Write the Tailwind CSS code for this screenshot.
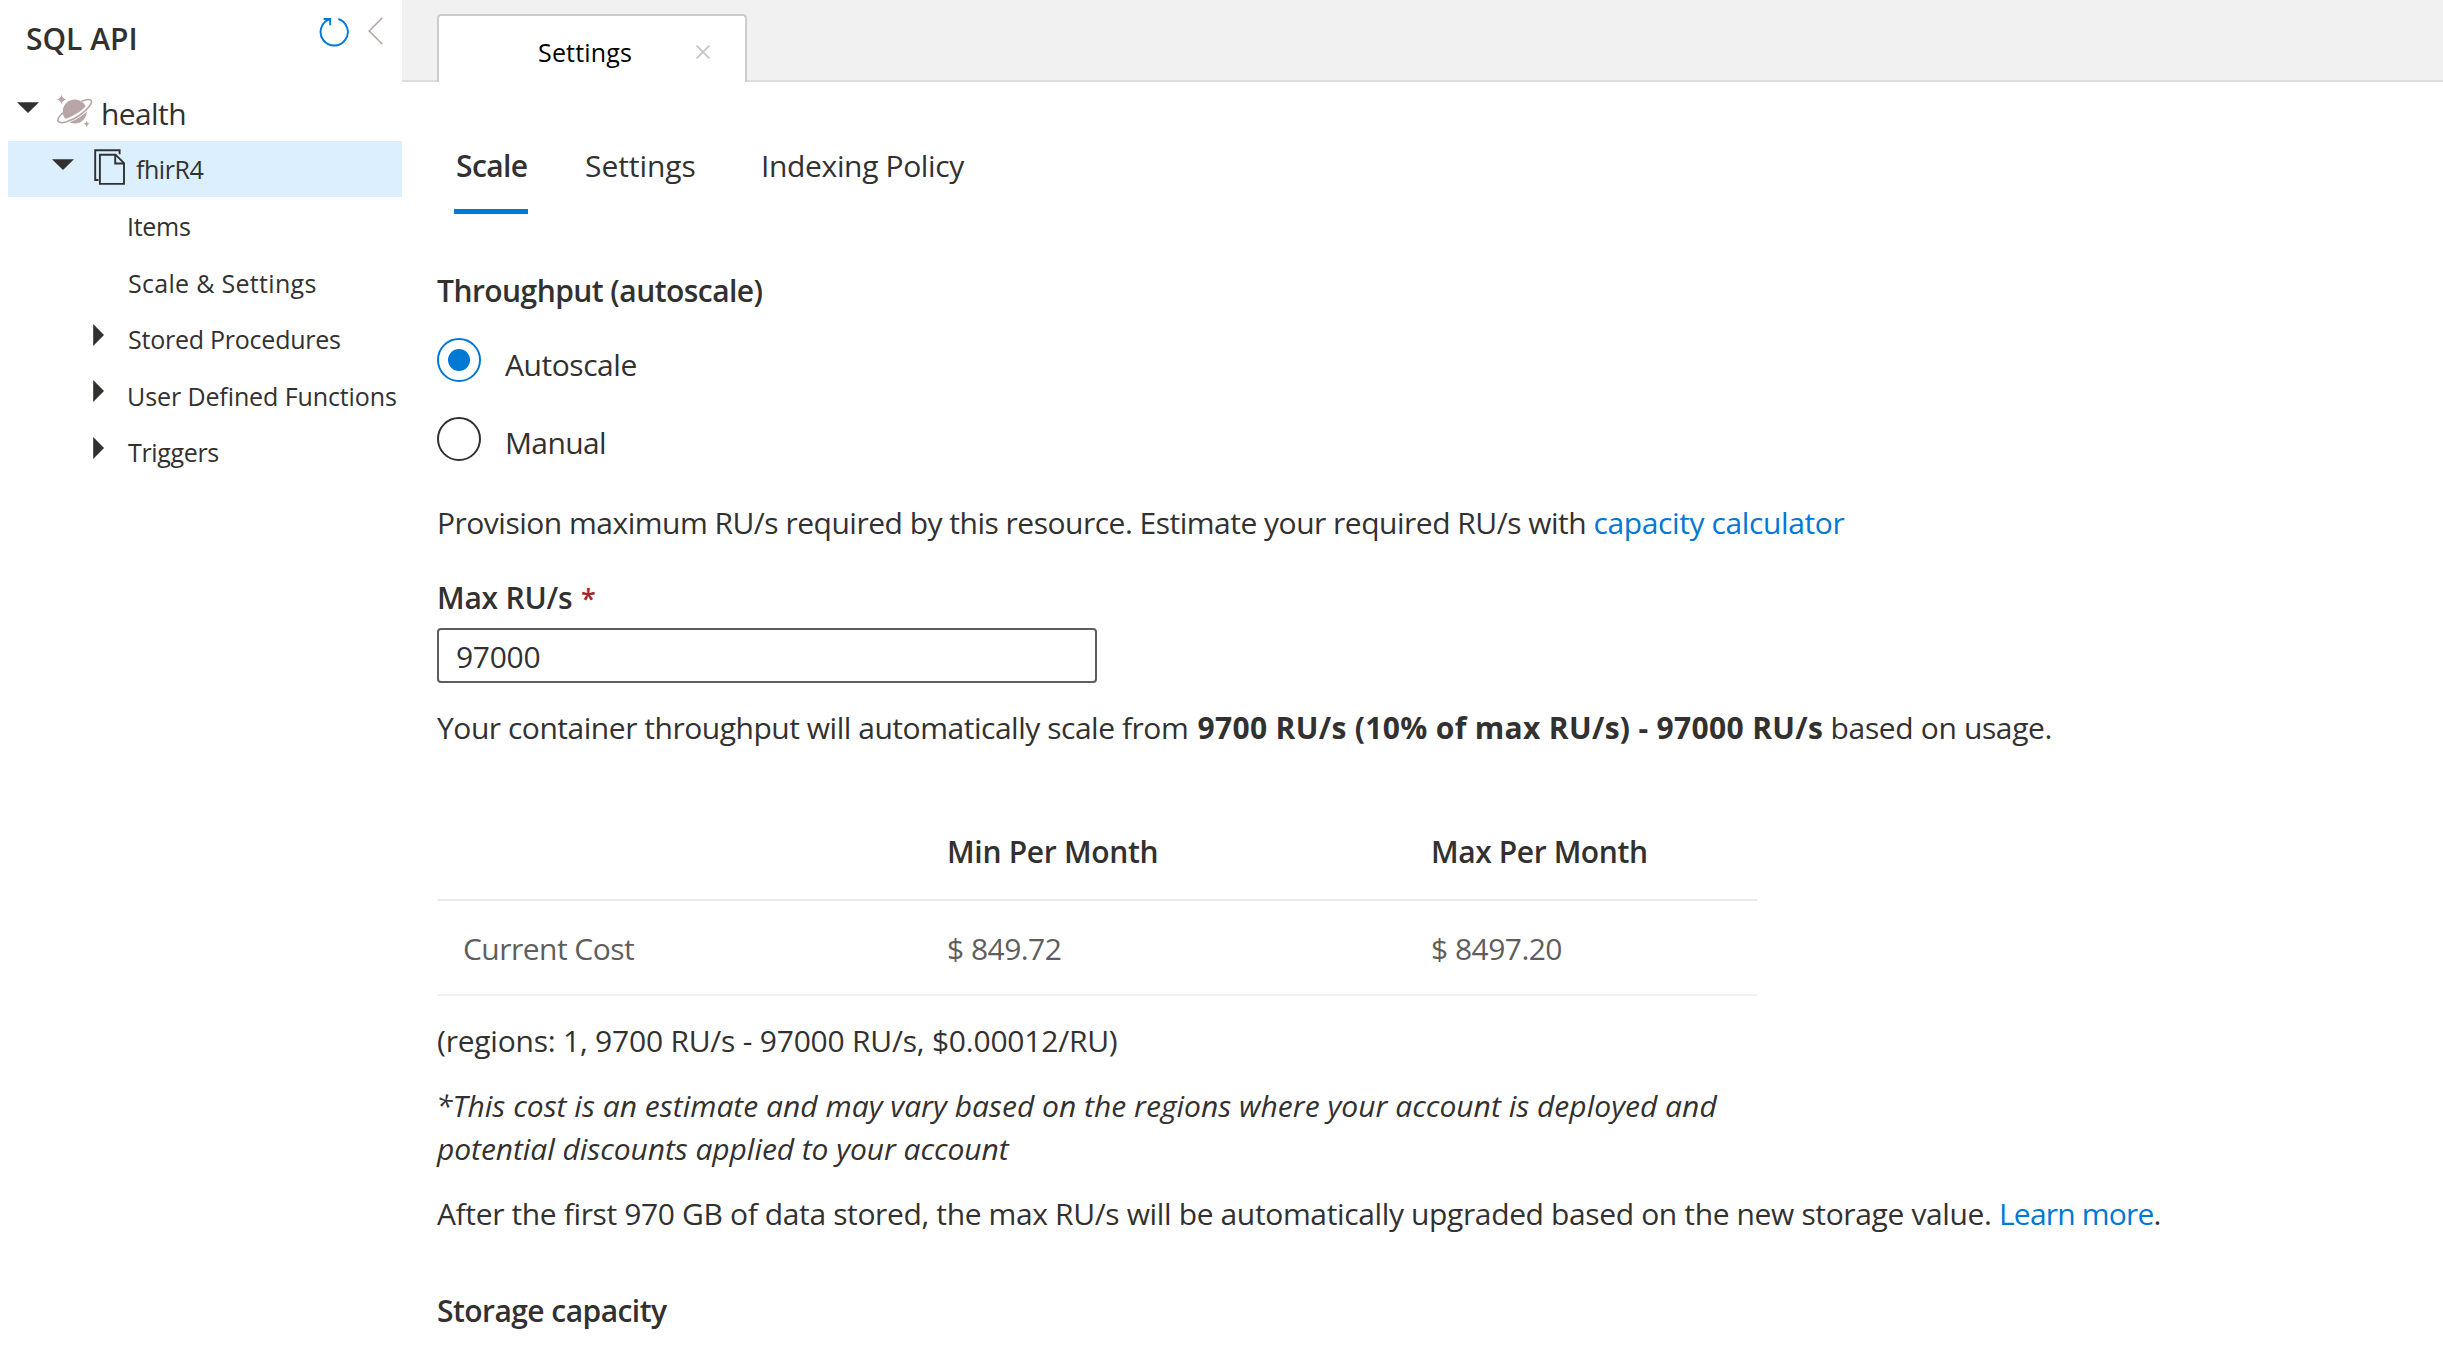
<!DOCTYPE html>
<html lang="en">
<head>
<meta charset="utf-8">
<title>SQL API - Settings</title>
<script src="https://cdn.jsdelivr.net/npm/@tailwindcss/browser@4"></script>
</head>
<body class="flex h-[1347px] w-[2443px] overflow-hidden bg-white font-['Open_Sans',sans-serif] text-[30px] leading-[41px] whitespace-nowrap text-[#323130]">

<!-- Resource tree -->
<aside class="w-[402px] shrink-0">
  <header class="flex h-[85px] items-start pt-[18px] pl-[26px]">
    <h1 class="w-[292px] font-semibold">SQL API</h1>
    <svg class="-mt-[3px] h-8 w-8" viewBox="0 0 32 32" fill="none" stroke="#0078d4" stroke-width="1.9"><path d="M20.4 4A13.6 13.6 0 1 1 12 4"/><path d="M5.6 4H12.2V10.2"/></svg>
    <svg class="ml-[18px] -mt-[2px] h-[30px] w-4" viewBox="0 0 16 30" fill="none" stroke="#b8a5a5" stroke-width="1.6"><path d="M14.4 1.7 1.2 15 14.4 28.3"/></svg>
  </header>
  <ul>
    <li class="flex h-14 items-start pt-2 pl-[17px]">
      <svg class="mt-[9px] h-[11px] w-[22px]" viewBox="0 0 22 11"><path d="M0 .2H22L11 11Z" fill="#323130"/></svg>
      <svg class="ml-[17px] h-[36px] w-[38px]" viewBox="56 93 38 36" fill="none" stroke="#b8a5a5">
        <circle cx="74.800" cy="111.600" r="12" fill="#b8a5a5" stroke="none"/>
        <path d="M62 122.300C69 121 79 116 85.500 109.800L88.500 106.500" stroke="#fff" stroke-width="4.600"/>
        <path d="M64.500 111.500C59 116 57 119.800 58.300 121.600C60.500 124.300 71 121.300 80 115C88 109.400 92.800 103 91.200 100.600C90 98.900 86 99.400 81.500 101.200" stroke-width="1.600"/>
        <path d="M61.500 94.500Q62.200 98.700 66.300 99.400Q62.200 100.100 61.500 104.200Q60.800 100.100 56.700 99.400Q60.800 98.700 61.500 94.500ZM86.600 120.700Q87 123.400 89.700 123.800Q87 124.200 86.600 126.900Q86.200 124.200 83.500 123.800Q86.200 123.400 86.600 120.700Z" fill="#b8a5a5" stroke="none"/>
      </svg>
      <span class="ml-[7px] tracking-[-0.6px]">health</span>
    </li>
    <li class="ml-2 flex h-14 items-start bg-[#dceffe] pt-[11px] pl-[44px] text-[25px] leading-[34px]">
      <svg class="mt-[7px] h-[11px] w-[22px]" viewBox="0 0 22 11"><path d="M0 .2H22L11 11Z" fill="#323130"/></svg>
      <svg class="-mt-[4px] ml-[19px] h-[38px] w-[34px]" viewBox="93 148 34 38" fill="none" stroke="#323130" stroke-width="1.900"><path d="M98.500 180H95.200V150.200H119.600V154.200"/><path d="M99.900 154.700H115.500L124 163.200V183.900H99.900ZM115.200 154.900V163.500H123.900"/></svg>
      <span class="ml-[9px] tracking-[-0.45px]">fhirR4</span>
    </li>
    <li class="mt-px h-[57px] pt-[11px] pl-[127px] text-[25px] leading-[34px] tracking-[-0.27px]">Items</li>
    <li class="h-14 pt-[11px] pl-[128px] text-[25px] leading-[34px] tracking-[0.3px]">Scale &amp; Settings</li>
    <li class="flex h-[57px] items-start pt-[11px] pl-[93px] text-[25px] leading-[34px] tracking-[-0.24px]">
      <svg class="mt-[2px] h-[22px] w-[11px]" viewBox="0 0 11 22"><path d="M.2 0V22L11 11Z" fill="#323130"/></svg>
      <span class="ml-6">Stored Procedures</span>
    </li>
    <li class="flex h-14 items-start pt-[11px] pl-[93px] text-[25px] leading-[34px] tracking-[-0.1px]">
      <svg class="mt-px h-[22px] w-[11px]" viewBox="0 0 11 22"><path d="M.2 0V22L11 11Z" fill="#323130"/></svg>
      <span class="ml-[23px]">User Defined Functions</span>
    </li>
    <li class="flex h-14 items-start pt-[11px] pl-[93px] text-[25px] leading-[34px] tracking-[-0.35px]">
      <svg class="mt-[2px] h-[22px] w-[11px]" viewBox="0 0 11 22"><path d="M.2 0V22L11 11Z" fill="#323130"/></svg>
      <span class="ml-6">Triggers</span>
    </li>
  </ul>
</aside>

<main class="flex-1">
  <!-- Document tabs -->
  <div class="flex h-[82px] items-end bg-[#f1f1f1]">
    <div class="h-[82px] w-[35px] border-b-2 border-[#dcdcdc]"></div>
    <div class="flex h-[68px] w-[310px] items-start rounded-t-[4px] border-x-2 border-t-2 border-[#cccccc] bg-white pt-[19px] pl-[99px] text-[25px] leading-[34px] text-black">
      <span class="w-[158px] tracking-[0.17px]">Settings</span>
      <svg class="mt-[10px] h-[14px] w-[14px]" viewBox="0 0 14 14" fill="none" stroke="#c8c6c4" stroke-width="1.800"><path d="M.6.6 13.400 13.400M13.400.6.6 13.400"/></svg>
    </div>
    <div class="h-[82px] flex-1 border-b-2 border-[#dcdcdc]"></div>
  </div>

  <div class="pl-[35px]">
    <nav class="flex pt-[63px] pl-[17px]">
      <div class="h-[69px] w-[74px] border-b-[5px] border-[#0078d4] pl-[2px] font-semibold tracking-[-0.6px]">Scale</div>
      <div class="ml-[57px] w-[176px] tracking-[-0.05px]">Settings</div>
      <div class="tracking-[-0.36px]">Indexing Policy</div>
    </nav>

    <h2 class="mt-14 font-semibold tracking-[-0.55px]">Throughput (autoscale)</h2>
    <div class="mt-[27px] flex h-11 items-start">
      <span class="flex h-11 w-11 items-center justify-center rounded-full border-2 border-[#0078d4]"><span class="h-[22px] w-[22px] rounded-full bg-[#0078d4]"></span></span>
      <span class="mt-[6px] ml-6 tracking-[-0.45px]">Autoscale</span>
    </div>
    <div class="mt-[35px] flex h-11 items-start">
      <span class="h-11 w-11 rounded-full border-2 border-[#323130]"></span>
      <span class="mt-[5px] ml-6 tracking-[-0.62px]">Manual</span>
    </div>

    <p class="mt-[41px] tracking-[-0.5px]">Provision maximum RU/s required by this resource. Estimate your required RU/s with <a class="tracking-[-0.38px] text-[#0078d4]">capacity calculator</a></p>

    <div class="mt-[34px] h-[41px] font-semibold tracking-[-0.22px]">Max RU/s <span class="ml-px text-[27px] leading-none text-[#a4262c]">*</span></div>
    <div class="mt-[10px] h-[55px] w-[660px] rounded-[4px] border-2 border-[#605e5c] pt-[6px] pl-[17px] tracking-[-0.28px]">97000</div>

    <p class="mt-6 tracking-[-0.47px]">Your container throughput will automatically scale from <b class="ml-[2px] font-bold tracking-[0.33px]">9700 RU/s (10% of max RU/s) - 97000 RU/s</b> <span class="tracking-[-0.36px]">based on usage.</span></p>

    <!-- Cost summary -->
    <div class="mt-12 w-[1320px]">
      <div class="grid grid-cols-[510px_484px_1fr] border-b-2 border-[#eaeaea] pt-[35px] pb-[27px] font-semibold tracking-[-0.3px]">
        <span></span><span>Min Per Month</span><span class="tracking-[-0.4px]">Max Per Month</span>
      </div>
      <div class="grid grid-cols-[484px_484px_1fr] border-b-2 border-[#f1f1f1] pt-[27px] pb-[25px] pl-[26px] tracking-[-0.53px] text-[#605e5c]">
        <span>Current Cost</span><span>$ 849.72</span><span>$ 8497.20</span>
      </div>
    </div>

    <p class="mt-6 tracking-[-0.22px]">(regions: 1, 9700 RU/s - 97000 RU/s, $0.00012/RU)</p>
    <p class="mt-[23px] -ml-px leading-[43px] tracking-[0.02px] italic">*This cost is an estimate and may vary based on the regions where your account is deployed and<br><span class="ml-px tracking-[-0.06px]">potential discounts applied to your account</span></p>
    <p class="mt-[23px] tracking-[-0.364px]">After the first 970 GB of data stored, the max RU/s will be automatically upgraded based on the new storage value. <a class="tracking-[-0.8px] text-[#0078d4]">Learn more</a>.</p>
    <h2 class="mt-14 font-semibold tracking-[-0.55px]">Storage capacity</h2>
  </div>
</main>
</body>
</html>
